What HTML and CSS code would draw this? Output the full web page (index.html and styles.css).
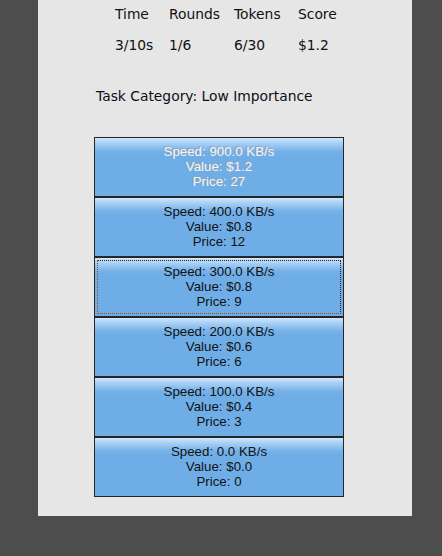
FILE: index.html
```html
<!DOCTYPE html>
<html>
<head>
<meta charset="utf-8">
<link rel="stylesheet" href="styles.css">
</head>
<body>
<div class="panel">
  <div class="stats">
    <span>Time</span><span>Rounds</span><span>Tokens</span><span>Score</span>
    <span>3/10s</span><span>1/6</span><span>6/30</span><span>$1.2</span>
  </div>
  <div class="category">Task Category: Low Importance</div>
  <div class="options">
    <button class="opt" disabled>Speed: 900.0 KB/s<br>Value: $1.2<br>Price: 27</button>
    <button class="opt">Speed: 400.0 KB/s<br>Value: $0.8<br>Price: 12</button>
    <button class="opt focus">Speed: 300.0 KB/s<br>Value: $0.8<br>Price: 9</button>
    <button class="opt">Speed: 200.0 KB/s<br>Value: $0.6<br>Price: 6</button>
    <button class="opt">Speed: 100.0 KB/s<br>Value: $0.4<br>Price: 3</button>
    <button class="opt">Speed: 0.0 KB/s<br>Value: $0.0<br>Price: 0</button>
  </div>
</div>
</body>
</html>
```
FILE: styles.css
```css
html, body {
  margin: 0;
  padding: 0;
  background: #4d4d4d;
  height: 100%;
}
.panel {
  margin-left: 38px;
  width: 374px;
  height: 516px;
  background: #e6e6e6;
  box-sizing: border-box;
  padding-top: 6px;
  font-family: "DejaVu Sans", Verdana, sans-serif;
  font-size: 13.85px;
  color: #111;
}
.stats {
  display: grid;
  grid-template-columns: 54px 65px 64px auto;
  justify-content: start;
  row-gap: 15px;
  margin-left: 77px;
  line-height: 16px;
}
.category {
  margin-top: 35px;
  margin-left: 58px;
  line-height: 16px;
  color: #0d0d1a;
}
.options {
  margin-top: 33px;
  margin-left: 56px;
  width: 250px;
  display: flex;
  flex-direction: column;
}
.opt {
  position: relative;
  height: 60px;
  width: 250px;
  margin: 0;
  border: 1px solid #262626;
  background: linear-gradient(to bottom, #cfe7fd 0px, #a9d0f5 5px, #76b2e9 13px, #6eade6 17px, #6eade6 100%);
  font-family: "Liberation Sans", Arial, sans-serif;
  font-size: 13.3px;
  line-height: 15px;
  color: #111;
  padding: 0 0 2px 0;
  text-align: center;
}
.opt:disabled {
  color: #f4f4f4;
  text-shadow: -1px -1px 0 #9aa4b0;
}
.focus::after {
  content: "";
  position: absolute;
  left: 2px;
  top: 2px;
  right: 2px;
  bottom: 2px;
  border: 1px dotted #222;
  border-left-color: #a0521b;
  border-bottom-color: #a0521b;
}
```
